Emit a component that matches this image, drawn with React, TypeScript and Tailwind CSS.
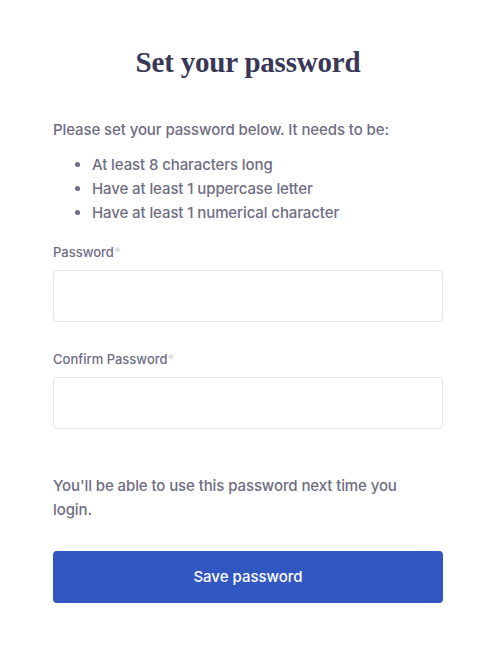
import React from 'react';

export default function App() {
  return (
    <div className="min-h-[651px] w-full bg-white font-['Inter',sans-serif]">
      <div className="ml-[53px] w-[390px] pt-[44px]">
        <h1 className="text-center font-['Liberation_Serif',serif] text-[29px] font-bold leading-[36px] text-[#393756] tracking-[-0.2px]">
          Set your password
        </h1>

        <p className="mt-[38px] text-[15px] font-medium leading-[24px] tracking-[-0.1px] text-[#6f6d83]">
          Please set your password below. It needs to be:
        </p>
        <ul className="mt-[11px] list-disc pl-[39px] text-[15px] font-medium leading-[24px] tracking-[-0.1px] text-[#6f6d83]">
          <li>At least 8 characters long</li>
          <li>Have at least 1 uppercase letter</li>
          <li>Have at least 1 numerical character</li>
        </ul>

        <div className="mt-[18px]">
          <label className="block text-[13px] font-medium leading-[18px] text-[#6f6d83]">
            Password<span className="text-[#d6d5de]">*</span>
          </label>
          <input
            type="password"
            className="mt-[9px] block h-[52px] w-full rounded-[4px] border border-[#e6e6ec] bg-white px-3 outline-none"
          />
        </div>

        <div className="mt-[28px]">
          <label className="block text-[13px] font-medium leading-[18px] text-[#6f6d83]">
            Confirm Password<span className="text-[#d6d5de]">*</span>
          </label>
          <input
            type="password"
            className="mt-[9px] block h-[52px] w-full rounded-[4px] border border-[#e6e6ec] bg-white px-3 outline-none"
          />
        </div>

        <p className="mt-[45px] max-w-[360px] text-[15px] font-medium leading-[24px] tracking-[-0.1px] text-[#6f6d83]">
          You'll be able to use this password next time you login.
        </p>

        <button className="mt-[29px] flex h-[52px] w-full items-center justify-center rounded-[4px] bg-[#3257c1] text-[15px] font-medium text-white">
          Save password
        </button>
      </div>
    </div>
  );
}
